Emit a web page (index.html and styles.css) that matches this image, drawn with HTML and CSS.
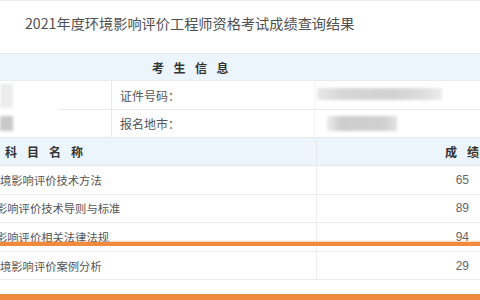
FILE: index.html
```html
<!DOCTYPE html>
<html lang="zh-CN">
<head>
<meta charset="utf-8">
<link rel="stylesheet" href="styles.css">
</head>
<body>
<div class="page">
  <div class="title-bar">
    <h1 class="title">2021年度环境影响评价工程师资格考试成绩查询结果</h1>
  </div>

  <div class="info">
    <div class="band band-info"><span class="band-text">考生信息</span></div>
    <div class="info-grid">
      <div class="cell cell-left row1"><span class="blur blur-l1"></span></div>
      <div class="cell cell-label row1">证件号码：</div>
      <div class="cell cell-value row1"><span class="blur blur-v1"></span></div>
      <div class="cell cell-left row2"><span class="blur blur-l2"></span></div>
      <div class="cell cell-label row2">报名地市：</div>
      <div class="cell cell-value row2"><span class="blur blur-v2"></span></div>
    </div>
  </div>

  <div class="scores">
    <div class="band score-head">
      <div class="sh-name">科目名称</div>
      <div class="sh-score">成绩</div>
    </div>
    <div class="score-row">
      <div class="s-name">境影响评价技术方法</div>
      <div class="s-val">65</div>
    </div>
    <div class="score-row">
      <div class="s-name shift">影响评价技术导则与标准</div>
      <div class="s-val">89</div>
    </div>
    <div class="score-row">
      <div class="s-name shift">影响评价相关法律法规</div>
      <div class="s-val">94</div>
    </div>
    <div class="score-row">
      <div class="s-name">境影响评价案例分析</div>
      <div class="s-val">29</div>
    </div>
    <div class="highlight"></div>
  </div>
</div>
</body>
</html>
```

FILE: styles.css
```css
* { box-sizing: border-box; }
html, body {
  margin: 0;
  padding: 0;
  width: 480px;
  height: 300px;
  overflow: hidden;
  background: #fff;
}
body {
  font-family: "Noto Sans CJK SC", "Noto Sans", "Liberation Sans", sans-serif;
  color: #555;
}
.page {
  position: relative;
  width: 480px;
  height: 300px;
  overflow: hidden;
}
.title-bar {
  height: 53px;
  border-top: 1px solid #ececec;
  padding: 12px 0 0 25px;
}
.title {
  margin: 0;
  font-size: 14.2px;
  line-height: 20px;
  font-weight: 400;
  color: #505050;
  letter-spacing: 0;
  white-space: nowrap;
}
.band {
  background: #edf5fc;
}
.band-info {
  height: 28px;
  border-top: 1px solid #e4e9ee;
  border-bottom: 1px solid #e6ecf2;
  display: flex;
  align-items: center;
  padding-left: 152px;
}
.band-text {
  font-size: 12px;
  font-weight: 700;
  color: #333;
  letter-spacing: 9.5px;
}
.info-grid {
  display: grid;
  grid-template-columns: 112px 203px 1fr;
  grid-template-rows: 29px 28px;
}
.cell {
  display: flex;
  align-items: center;
  font-size: 12px;
  color: #555;
}
.row1 { border-bottom: 1px solid #e8e8e8; }
.row2 { border-bottom: 1px solid #e3e8ee; }
.cell-left {
  border-right: 1px solid #e8e8e8;
}
.cell-left.row1 {
  border-bottom: none;
  background: linear-gradient(#e8e8e8, #e8e8e8) no-repeat 58px 100% / 100% 1px;
}
.cell-label {
  padding-left: 8px;
  border-right: 1px solid #f3f3f3;
}
.cell-value {
  padding-left: 2px;
}
.blur {
  display: block;
  filter: blur(1.5px);
}
.blur-l1 {
  width: 13px;
  height: 24px;
  background: #ececec;
}
.blur-l2 {
  width: 13px;
  height: 15px;
  background: #c9c9c9;
}
.blur-v1 {
  width: 125px;
  height: 12px;
  margin-top: -3px;
  background: linear-gradient(90deg, #e8e8e8 0, #d6d6d6 20%, #d2d2d2 60%, #dddddd 85%, #ececec 100%);
}
.blur-v2 {
  width: 70px;
  height: 15px;
  margin-left: 10px;
  background: linear-gradient(90deg, #ececec 0, #cdcdcd 20%, #cfcfcf 80%, #e2e2e2 100%);
}
.score-head {
  display: grid;
  grid-template-columns: 317px 1fr;
  height: 28px;
  border-bottom: 1px solid #e3e8ee;
}
.sh-name, .sh-score {
  display: flex;
  align-items: center;
  font-size: 12px;
  font-weight: 700;
  color: #333;
  letter-spacing: 10px;
  white-space: nowrap;
}
.sh-name {
  padding-left: 5px;
  border-right: 1px solid #e6ebf0;
}
.sh-score {
  padding-left: 128px;
}
.score-row {
  display: grid;
  grid-template-columns: 317px 1fr;
  height: 28.6px;
  border-bottom: 1px solid #ececec;
}
.s-name, .s-val {
  display: flex;
  align-items: center;
  font-size: 11.3px;
  color: #555;
  white-space: nowrap;
}
.s-name {
  border-right: 1px solid #eeeeee;
}
.s-name.shift {
  margin-left: -4px;
}
.s-val {
  justify-content: flex-end;
  padding-right: 11px;
  font-family: "Liberation Sans", "Noto Sans", sans-serif;
  font-size: 12px;
  color: #666;
}
.highlight {
  position: absolute;
  left: 0;
  right: 0;
  top: 242px;
  height: 58px;
  border-top: 4px solid #f08a3c;
  border-bottom: 6px solid #f08a3c;
  box-shadow: 0 -1px 1px rgba(240, 138, 60, 0.35);
}
```
